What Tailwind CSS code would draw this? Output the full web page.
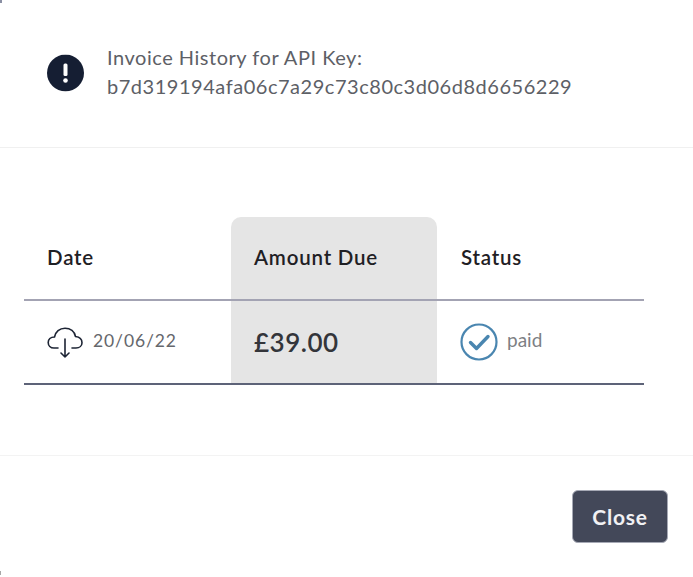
<!DOCTYPE html>
<html>
<head>
<meta charset="utf-8">
<script src="https://cdn.jsdelivr.net/npm/@tailwindcss/browser@4"></script>
</head>
<body class="bg-white">
<div class="relative w-[693px] h-[577px] bg-white font-['Lato','Open_Sans',sans-serif] flex flex-col overflow-hidden">
  <div class="absolute left-0 top-0 w-[2px] h-[3px] bg-[#8a8fa3]"></div>
  <div class="absolute left-0 top-[571px] w-[1px] h-[4px] bg-[#a8a8a8]"></div>
  <header class="h-[148px] flex items-center gap-[23px] pl-[47px] pb-[3px] border-b border-[#f0f0f0] shrink-0">
    <svg class="w-[37px] h-[37px] shrink-0 translate-y-[0.5px]" viewBox="0 0 37 37">
      <circle cx="18.5" cy="18.5" r="18.5" fill="#151e33"/>
      <rect x="16.5" y="9" width="4" height="12.5" rx="1.5" fill="#fff"/>
      <circle cx="18.5" cy="26" r="2.3" fill="#fff"/>
    </svg>
    <div class="text-[20px] leading-[29px] text-[#5d6066] tracking-[0.53px]">
      <p>Invoice History for API Key:</p>
      <p>b7d319194afa06c7a29c73c80c3d06d8d6656229</p>
    </div>
  </header>
  <main class="h-[307px] shrink-0 pt-[69px] pl-[24px]">
    <div class="w-[620px] grid grid-cols-[207px_206px_207px] grid-rows-[84px_84px]">
      <div class="border-b-2 border-[#a3a3b3] flex items-center pb-[2px] pl-[23px] text-[20.5px] font-semibold text-[#1f2024] tracking-[0.8px]">Date</div>
      <div class="border-b-2 border-[#a3a3b3] bg-[#e5e5e5] rounded-t-[10px] flex items-center pb-[2px] pl-[23px] text-[20.5px] font-semibold text-[#1f2024] tracking-[0.8px]">Amount Due</div>
      <div class="border-b-2 border-[#a3a3b3] flex items-center pb-[2px] pl-[24px] text-[20.5px] font-semibold text-[#1f2024] tracking-[0.8px]">Status</div>
      <div class="border-b-2 border-[#5d6378] flex items-center pl-[23px] gap-[10px]">
        <svg class="w-[36px] h-[32px] shrink-0" viewBox="0 0 36 32" fill="none" stroke="#1d2434" stroke-width="1.6" stroke-linecap="round" stroke-linejoin="round">
          <path d="M11 22H7C3.500 22 1.200 19.500 1.200 16.500S3.500 11 7.500 11C8.500 6 12.500 2.200 18 2.200C23.500 2.200 27.500 5.500 28.500 10.500C32.500 11 35 13.500 35 16.700C35 19.800 32.500 22 29 22H25"/>
          <path d="M18 13V31M14 27l4 4 4-4"/>
        </svg>
        <span class="text-[17.5px] text-[#65676c] tracking-[0.9px] -translate-y-[1px]">20/06/22</span>
      </div>
      <div class="border-b-2 border-[#5d6378] bg-[#e5e5e5] flex items-center pl-[23px] text-[26px] font-semibold text-[#33353a] tracking-[0.5px]">£39.00</div>
      <div class="border-b-2 border-[#5d6378] flex items-center pl-[23px] gap-[9px]">
        <svg class="w-[38px] h-[38px] shrink-0" viewBox="0 0 38 38" fill="none" stroke="#4a86b0">
          <circle cx="19" cy="19" r="17.500" stroke-width="2.200"/>
          <path d="M10.500 19.500l6 6L28 13.500" stroke-width="3.400" stroke-linecap="round" stroke-linejoin="round"/>
        </svg>
        <span class="text-[19px] text-[#7d7f84] -translate-y-[2px]">paid</span>
      </div>
    </div>
  </main>
  <footer class="flex-1 border-t border-[#f3f3f3] flex justify-end items-start pt-[34px] pr-[25px]">
    <button class="w-[96px] h-[53px] bg-[#434859] rounded-[6px] border border-[#a6a9b5] text-[#f1f1f4] text-[21px] font-bold tracking-[0.8px] flex items-center justify-center">Close</button>
  </footer>
</div>
</body>
</html>
